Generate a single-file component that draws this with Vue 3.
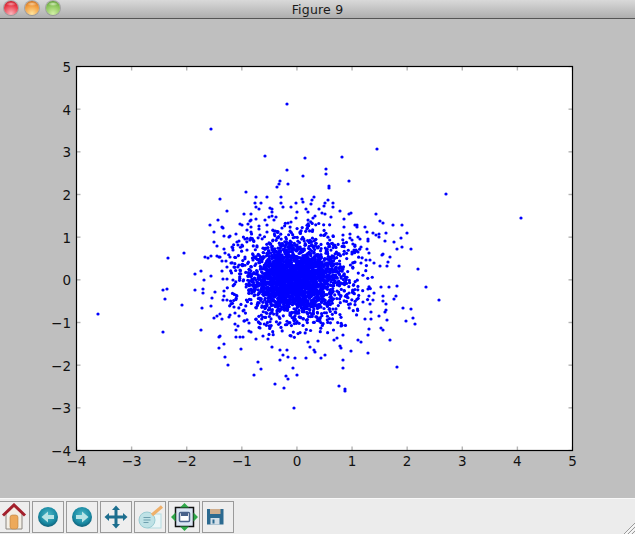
<script setup>
// seeded so the scatter looks the same on every load
function makeRandom(seed) {
    let s = seed;
    return () => {
        s = (s + 0x6d2b79f5) | 0;
        let t = Math.imul(s ^ (s >>> 15), 1 | s);
        t = (t + Math.imul(t ^ (t >>> 7), 61 | t)) ^ t;
        return ((t ^ (t >>> 14)) >>> 0) / 4294967296;
    };
}

// sparse outer points, in figure pixels
const outer = [
    [287,104],[211,129],[98,314],[521,218],[446,194],[377,149],[265,156],[287,170],[280,181],[279,184],[277,187],[288,184],[246,192],[256,197],[267,197],[281,197],[220,199],[255,203],[261,203],[281,203],[296,203],[256,207],[259,209],[270,208],[272,209],[283,207],[291,207],[227,211],[244,214],[251,214],[272,212],[272,216],
    [305,158],[342,157],[326,169],[326,174],[303,176],[349,181],[329,186],[329,188],[314,197],[302,199],[312,200],[328,200],[303,202],[333,203],[325,203],[311,204],[324,206],[333,207],[306,209],[319,209],[340,211],[351,213],[349,214],[376,214],[322,213],[308,212],[325,214],[331,217],[315,216],[313,218],[344,219],[380,221],[383,223],[393,225],[402,225],[355,225],[357,225],[365,227],[357,227],[344,227],[367,232],[386,233],[407,233],[373,233],[376,235],[379,234],[379,237],[350,234],[343,235],[358,237],[350,238],[352,240],[360,239],[368,239],[368,241],[385,241],[394,242],[401,238],[355,245],[361,247],[402,247],[397,249],[411,249],[367,249],[358,252],[369,253],[383,254],[382,255],[390,257],[352,252],[352,254],[354,250],[418,269],[399,266],[387,266],[380,266],[388,262],[374,263],[370,260],[366,260],[361,263],[355,262],
    [426,287],[397,286],[389,287],[381,287],[439,300],[403,308],[411,309],[413,318],[406,321],[415,324],[387,320],[379,316],[386,310],[385,312],[371,312],[371,319],[365,319],[369,329],[381,328],[383,330],[368,335],[390,340],[358,340],[361,342],[368,353],[351,351],[397,367],[343,360],[343,368],[339,386],[345,389],[345,391],[325,355],[321,358],[306,358],[315,352],[314,350],[310,347],[340,346],[341,348],[334,340],[337,338],[343,335],[318,341],[308,342],[396,296],[394,299],[386,304],[383,301],[383,296],[373,300],[374,293],[368,289],[370,304],[369,296],[363,302],
    [163,290],[167,289],[195,290],[203,289],[203,293],[215,292],[165,299],[182,305],[212,298],[202,308],[211,306],[163,332],[201,330],[214,318],[217,316],[220,314],[222,319],[229,317],[230,315],[235,324],[238,326],[236,330],[220,336],[219,337],[236,337],[240,337],[243,337],[224,344],[219,348],[241,349],[256,339],[268,339],[272,347],[280,350],[287,350],[283,355],[288,357],[295,358],[280,360],[225,357],[228,365],[258,362],[261,369],[254,375],[293,368],[286,376],[288,379],[297,375],[275,384],[284,388],[294,408],[263,336],[224,291],[224,296],[223,300],[227,300],[231,304],[234,307],[235,313],[244,310],[239,316],[244,321],[249,323],[249,331],[251,332],[260,328],
    [168,258],[184,253],[195,274],[201,271],[205,257],[208,258],[211,256],[217,256],[219,257],[210,225],[214,232],[218,220],[222,227],[223,228],[224,236],[229,237],[230,236],[214,242],[217,246],[224,249],[225,253],[232,247],[236,234],[237,242],[239,241],[245,239],[240,224],[242,225],[248,224],[247,230],[251,220],[250,221],[256,219],[265,220],[269,217],[276,217],[274,220],[267,225],[259,226],[259,229],[251,227],[251,232],[267,232],[274,231],[282,228],[288,223],[291,222],[296,218],[297,212],[222,261],[220,257],[226,261],[230,257],[233,250],[238,245],[242,245],[231,263],[222,271],[227,267],[211,276],[204,280],[223,279],[227,279],[233,280],[234,267],[239,265],[240,270],[247,250],[245,257],[257,247],[253,260],[250,240],[260,235],[273,240],
];

// dense middle of the cloud, a tight blob inside a wider one
const random = makeRandom(9);
const core = [];
function scatter(count, sx, sy, limit) {
    let made = 0;
    while (made < count) {
        const r = Math.sqrt(-2 * Math.log(1 - random()));
        const a = random() * Math.PI * 2;
        if (r > limit) continue;
        core.push([296 + sx * r * Math.cos(a), 279 + sy * r * Math.sin(a)]);
        made++;
    }
}
scatter(1300, 33, 26, 2.35);
scatter(1500, 20, 16, 2.7);
const points = [...outer, ...core];

const LEFT = 76.5;
const RIGHT = 572.5;
const TOP = 66.5;
const BOTTOM = 450.5;

const xTicks = [-4, -3, -2, -1, 0, 1, 2, 3, 4, 5].map((v, i) => ({
    label: v < 0 ? `\u2212${-v}` : `${v}`,
    pos: LEFT + (i * (RIGHT - LEFT)) / 9,
}));
const yTicks = [-4, -3, -2, -1, 0, 1, 2, 3, 4, 5].map((v, i) => ({
    label: v < 0 ? `\u2212${-v}` : `${v}`,
    pos: BOTTOM - (i * (BOTTOM - TOP)) / 9,
}));
</script>

<template>
    <div class="window">
        <div class="titlebar">
            <div class="lights">
                <span class="light red"></span>
                <span class="light amber"></span>
                <span class="light green"></span>
            </div>
            <span class="title">Figure 9</span>
        </div>

        <svg class="figure" viewBox="0 19 635 479" width="635" height="479">
            <rect :x="LEFT" :y="TOP" :width="RIGHT - LEFT" :height="BOTTOM - TOP" fill="#fff" />
            <circle v-for="(p, i) in points" :key="i" :cx="p[0]" :cy="p[1]" r="1.6" fill="#0000ff" />
            <g stroke="#b4b4b4" stroke-width="1.4">
                <template v-for="t in xTicks" :key="t.label">
                    <line :x1="t.pos" :x2="t.pos" :y1="TOP" :y2="TOP + 4" />
                    <line :x1="t.pos" :x2="t.pos" :y1="BOTTOM" :y2="BOTTOM - 4" />
                </template>
                <template v-for="t in yTicks" :key="t.label">
                    <line :y1="t.pos" :y2="t.pos" :x1="LEFT" :x2="LEFT + 4" />
                    <line :y1="t.pos" :y2="t.pos" :x1="RIGHT" :x2="RIGHT - 4" />
                </template>
            </g>
            <rect :x="LEFT" :y="TOP" :width="RIGHT - LEFT" :height="BOTTOM - TOP" fill="none" stroke="#000" stroke-width="1.2" />
            <text v-for="t in xTicks" :key="t.label" class="tick" :x="t.pos" y="466" text-anchor="middle">{{ t.label }}</text>
            <text v-for="t in yTicks" :key="t.label" class="tick" x="71" :y="t.pos + 5.5" text-anchor="end">{{ t.label }}</text>
        </svg>

        <div class="toolbar">
            <button class="tool first">
                <svg viewBox="0 0 28 28" width="28" height="28">
                    <path d="M6 10v16h16V10L14 3z" fill="#f3efe6" stroke="#8b8680" />
                    <rect x="10" y="12" width="8" height="14" rx="2.500" fill="#eda95a" stroke="#b8803f" stroke-width=".6" />
                    <path d="M3 12.500 14 2l11 10.500" fill="none" stroke="#a3202c" stroke-width="3" />
                </svg>
            </button>
            <button class="tool">
                <svg viewBox="0 0 28 28" width="28" height="28">
                    <circle cx="14" cy="14" r="10" fill="url(#ball)" />
                    <path d="M7.500 14 14 8.500V12h6v4h-6v3.500z" fill="#b9e4e6" />
                </svg>
            </button>
            <button class="tool">
                <svg viewBox="0 0 28 28" width="28" height="28">
                    <circle cx="14" cy="14" r="10" fill="url(#ball)" />
                    <path d="M20.500 14 14 8.500V12H8v4h6v3.500z" fill="#b9e4e6" />
                </svg>
            </button>
            <button class="tool">
                <svg viewBox="0 0 28 28" width="28" height="28">
                    <path d="M14 2.500 18 7h-2.500v5.500H21V10l4.500 4-4.500 4v-2.500h-5.500V21H18l-4 4.500L10 21h2.500v-5.500H7V18l-4.500-4L7 10v2.500h5.500V7H10z" fill="#1c6e8e" />
                </svg>
            </button>
            <button class="tool">
                <svg viewBox="0 0 28 28" width="28" height="28">
                    <rect x="12" y="11" width="13" height="14" fill="#eaf6f7" stroke="#b4dbe0" />
                    <circle cx="11" cy="17" r="8" fill="#bfe2e6" stroke="#9accd3" />
                    <path d="M7.500 14.500h7M7.500 17h7M7.500 19.500h5" stroke="#6f9fae" stroke-width="1.200" />
                    <path d="M16 12 26 3.500" stroke="#efb06a" stroke-width="3.200" />
                </svg>
            </button>
            <button class="tool">
                <svg viewBox="0 0 28 28" width="28" height="28">
                    <rect x="5.500" y="4.500" width="18" height="19" fill="#d9e4f2" stroke="#111" stroke-width="1.500" />
                    <rect x="9.500" y="9.500" width="10" height="9" rx="1" fill="#fff" stroke="#49628a" stroke-width="1.500" />
                    <rect x="11" y="10" width="7" height="3" fill="#49628a" />
                    <path d="M14.500 0 19 4.500h-9zM14.500 28 19 23.500h-9zM1 14 5.500 9.500v9zM28 14 23.500 9.500v9z" fill="#2fa84a" />
                </svg>
            </button>
            <button class="tool">
                <svg viewBox="0 0 28 28" width="28" height="28">
                    <path d="M3 6h16.500v15.500H3z" fill="#2c6a90" />
                    <rect x="6" y="6" width="10.500" height="5" fill="#cfae8e" />
                    <rect x="6.500" y="15" width="9" height="6.500" fill="#d5e0e8" />
                    <rect x="8.500" y="16.500" width="2" height="4" fill="#2c6a90" />
                </svg>
            </button>
            <svg class="grip" viewBox="0 0 12 12" width="12" height="12">
                <path d="M1 12 12 1M5 12l7-7M9 12l3-3" stroke="#9a9a9a" stroke-width="1" />
                <path d="M2.500 12 12 2.500M6.500 12 12 6.500M10.500 12l1.500-1.500" stroke="#fff" stroke-width="1" />
            </svg>
        </div>

        <!-- shared gradient for the back/forward buttons -->
        <svg width="0" height="0" class="defs">
            <defs>
                <radialGradient id="ball" cx="50%" cy="40%" r="60%">
                    <stop offset="0" stop-color="#4fb9c8" />
                    <stop offset=".7" stop-color="#1a8aa3" />
                    <stop offset="1" stop-color="#0f5f78" />
                </radialGradient>
            </defs>
        </svg>
    </div>
</template>

<style scoped>
.window {
    position: relative;
    width: 635px;
    height: 534px;
    display: flex;
    flex-direction: column;
    overflow: hidden;
    background: #bfbfbf;
}

.titlebar {
    position: relative;
    flex: 0 0 19px;
    box-sizing: border-box;
    display: flex;
    align-items: center;
    justify-content: center;
    background: linear-gradient(#d9d9d9, #aeaeae);
    border-bottom: 1px solid #555;
}

.lights {
    position: absolute;
    left: 4px;
    top: 1px;
    display: flex;
    gap: 7px;
}

.light {
    width: 14px;
    height: 14px;
    border-radius: 50%;
    box-shadow: 0 0 0 1px rgba(120, 120, 120, 0.45);
}

.red {
    background: radial-gradient(ellipse 5px 2px at 50% 3px, #f4a0a8, transparent),
        radial-gradient(circle at 50% 90%, #fbb4ba, #e83a48 60%, #b5141f);
}

.amber {
    background: radial-gradient(ellipse 5px 2px at 50% 3px, #f8d0a0, transparent),
        radial-gradient(circle at 50% 90%, #ffe49c, #f09a3c 60%, #b9601a);
}

.green {
    background: radial-gradient(ellipse 5px 2px at 50% 3px, #d8eec0, transparent),
        radial-gradient(circle at 50% 90%, #d2f0a6, #8ac45a 60%, #4f8a2c);
}

.title {
    font-family: "DejaVu Sans", sans-serif;
    font-size: 12.500px;
    color: #1a1a1a;
    letter-spacing: 0.2px;
}

.figure {
    display: block;
    flex: 0 0 479px;
}

.tick {
    font-family: "DejaVu Sans", sans-serif;
    font-size: 13.500px;
    fill: #111;
}

.toolbar {
    position: relative;
    flex: 1;
    box-sizing: border-box;
    display: flex;
    align-items: flex-start;
    gap: 2px;
    padding-top: 2px;
    background: #ececec;
    border-top: 1px solid #f8f8f8;
}

.tool {
    width: 32px;
    height: 32px;
    box-sizing: border-box;
    display: flex;
    align-items: center;
    justify-content: center;
    padding: 0;
    background: #eeeeee;
    border: 1.500px solid #9a9a9a;
    border-radius: 0;
}

.first {
    margin-left: -2px;
}

.grip {
    position: absolute;
    right: 0;
    bottom: 0;
}

.defs {
    position: absolute;
}
</style>
